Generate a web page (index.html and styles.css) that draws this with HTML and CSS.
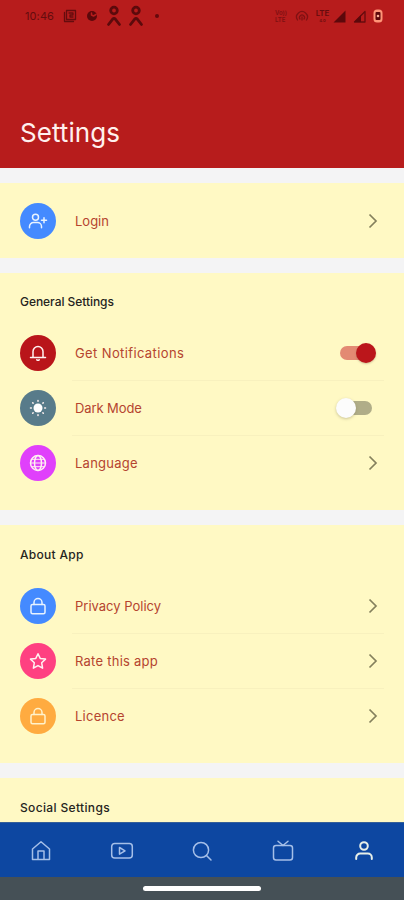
FILE: index.html
```html
<!DOCTYPE html>
<html lang="en">
<head>
<meta charset="utf-8">
<title>Settings</title>
<link rel="stylesheet" href="styles.css">
</head>
<body>
<svg class="defs" aria-hidden="true">
  <symbol id="chevron" viewBox="0 0 10 16"><path d="M1.500 1.500 8 8l-6.500 6.500"/></symbol>
  <symbol id="lock" viewBox="0 0 18 18"><rect x="2" y="7.500" width="14" height="9.200" rx="1.500"/><path d="M5 7.500V5.500a4 4 0 0 1 8 0v2"/></symbol>
  <symbol id="contact" viewBox="0 0 16 22"><circle cx="8" cy="5.500" r="3.300"/><path d="m2.500 19.500 4-5.200q1.500-1.500 3 0l4 5.200"/></symbol>
</svg>
<div class="phone">
  <header class="header">
    <div class="status">
      <div class="status-left">
        <span class="time">10:46</span>
        <svg width="14" height="14" viewBox="0 0 14 14"><path class="line" d="M3.500 1.500h9v9h-9zM1.500 3.500v9h9M6 4h4v2H7v2h3"/></svg>
        <svg width="12" height="12" viewBox="0 0 12 12"><circle class="solid" cx="6" cy="6" r="5"/><path class="cut" d="M5.500 3v2l2 1 2.500-1.500"/></svg>
        <svg class="contact" width="16" height="22"><use href="#contact"/></svg>
        <svg class="contact" width="16" height="22"><use href="#contact"/></svg>
        <i class="dot"></i>
      </div>
      <div class="status-right">
        <span class="volte">Vo))<br>LTE</span>
        <svg width="14" height="13" viewBox="0 0 14 13"><path class="line faint" d="M2.500 10a5.400 5.400 0 1 1 9 0M5 9a2.500 2.500 0 1 1 4 0M7 7v3"/></svg>
        <span class="lte"><b>LTE</b><small>4.0</small></span>
        <svg width="13" height="13" viewBox="0 0 13 13"><path class="solid" d="M12.500.5v12H.5z"/></svg>
        <svg width="13" height="13" viewBox="0 0 13 13"><path class="line" d="M12 1.500V12H1.500z"/><path class="solid" d="M8 5v7H1z"/></svg>
        <svg width="10" height="14" viewBox="0 0 10 14"><rect class="battery" x=".5" y=".5" width="9" height="13" rx="3.500"/><rect class="solid" x="2.500" y="3" width="5" height="8" rx="1"/><circle class="spark" cx="5" cy="7" r="1.300"/></svg>
      </div>
    </div>
    <h1>Settings</h1>
  </header>

  <main>
    <section class="card login">
      <div class="row">
        <span class="badge blue"><svg width="20" height="18" viewBox="0 0 20 18"><circle cx="7.500" cy="5.300" r="3"/><path d="M1.500 15.700V14.500a4 4 0 0 1 4-4h4a4 4 0 0 1 4 4v1.200M16 5.800v5M13.500 8.300h5"/></svg></span>
        <span class="label">Login</span>
        <svg class="chevron"><use href="#chevron"/></svg>
      </div>
    </section>

    <section class="card general">
      <h2>General Settings</h2>
      <div class="row">
        <span class="badge red"><svg width="18" height="18" viewBox="0 0 18 18"><path d="M1.500 13.500h15M4 13.500v-6a5 5 0 0 1 10 0v6M7.800 15.800q1.200 1 2.400 0"/></svg></span>
        <span class="label wide">Get Notifications</span>
        <span class="switch on"><i></i></span>
      </div>
      <div class="row">
        <span class="badge slate"><svg width="18" height="18" viewBox="0 0 18 18"><circle class="sun" cx="9" cy="9" r="4.500"/><path class="rays" d="M9 1.500v.8M9 15.700v.8M1.500 9h.8M15.700 9h.8M3.700 3.700l.4.400M13.900 13.900l.4.400M3.700 14.300l.4-.4M13.900 4.100l.4-.4"/></svg></span>
        <span class="label snug">Dark Mode</span>
        <span class="switch off"><i></i></span>
      </div>
      <div class="row">
        <span class="badge purple"><svg width="18" height="18" viewBox="0 0 18 18"><circle cx="9" cy="9" r="7.500"/><ellipse cx="9" cy="9" rx="3.500" ry="7.500"/><path d="M1.500 9h15M2.800 5.300h12.400M2.800 12.700h12.400" stroke-width="1"/></svg></span>
        <span class="label loose">Language</span>
        <svg class="chevron"><use href="#chevron"/></svg>
      </div>
    </section>

    <section class="card about">
      <h2>About App</h2>
      <div class="row">
        <span class="badge blue"><svg width="18" height="18"><use href="#lock"/></svg></span>
        <span class="label">Privacy Policy</span>
        <svg class="chevron"><use href="#chevron"/></svg>
      </div>
      <div class="row">
        <span class="badge pink"><svg width="18" height="18" viewBox="0 0 18 18"><path d="m9 1.700 2.200 4.700 5.300.7-3.800 3.700.9 5.400L9 13.600l-4.600 2.600.9-5.400-3.800-3.700 5.300-.7z"/></svg></span>
        <span class="label loose">Rate this app</span>
        <svg class="chevron"><use href="#chevron"/></svg>
      </div>
      <div class="row">
        <span class="badge orange"><svg width="18" height="18"><use href="#lock"/></svg></span>
        <span class="label loose">Licence</span>
        <svg class="chevron"><use href="#chevron"/></svg>
      </div>
    </section>

    <section class="card social">
      <h2>Social Settings</h2>
    </section>
  </main>

  <nav class="tabs">
    <a><svg width="22" height="22" viewBox="0 0 22 22"><path d="M2.500 9 11 1.800 19.500 9v10.500h-17zM8 19.500v-8.500h6v8.500"/></svg></a>
    <a><svg width="24" height="22" viewBox="0 0 24 22"><rect x="1.700" y="3.500" width="20.600" height="14.500" rx="3"/><path d="m9.500 7.500 5.500 3.300-5.500 3.300z"/></svg></a>
    <a><svg width="22" height="22" viewBox="0 0 22 22"><circle cx="10" cy="10" r="7.600"/><path d="m15.500 15.500 4.500 4.500"/></svg></a>
    <a><svg width="22" height="22" viewBox="0 0 22 22"><rect x="1.500" y="5.500" width="19" height="14.500" rx="2.500"/><path d="m6 1.300 5 4.200 5-4.200"/></svg></a>
    <a class="active"><svg width="22" height="22" viewBox="0 0 22 22"><circle cx="11" cy="6" r="3.800"/><path d="M3.200 19v-1.500a4 4 0 0 1 4-4h7.600a4 4 0 0 1 4 4V19"/></svg></a>
  </nav>
  <div class="gesture"><i></i></div>
</div>
</body>
</html>
```
FILE: styles.css
```css
* { box-sizing: border-box; }
body { margin: 0; font-family: Inter, "Noto Sans", sans-serif; }
svg { display: block; flex: none; fill: none; stroke: currentColor; stroke-width: 1.5; stroke-linecap: round; stroke-linejoin: round; }
.defs { position: absolute; width: 0; height: 0; }
.phone { width: 404px; height: 900px; display: flex; flex-direction: column; overflow: hidden; background: #f4f4f5; }

.header { flex: none; height: 168px; background: #b71c1c; color: #fff0ee; }
.status { height: 32px; padding: 0 21px 0 25px; display: flex; justify-content: space-between; align-items: center; color: #650c0e; }
.status-left, .status-right { display: flex; align-items: center; }
.time { width: 38px; font-size: 11px; letter-spacing: .1px; }
.status-left svg + svg { margin-left: 9px; }
.status-left svg + .contact { margin-left: 8px; }
.status-left .contact + .contact { margin-left: 6px; }
.contact { color: #5c0a0c; stroke-width: 2.8; }
.dot { width: 4px; height: 4px; margin-left: 11px; border-radius: 50%; background: #65090c; }
.volte { margin-right: 8px; font-size: 6px; line-height: 7px; font-weight: 600; color: #7d1012; }
.lte { width: 15px; margin: 0 3px 0 6px; display: flex; flex-direction: column; align-items: center; }
.lte b { font-size: 8px; line-height: 10px; font-weight: 600; letter-spacing: -.1px; }
.lte small { font-size: 4px; line-height: 6px; font-weight: 600; }
.status-right svg + svg { margin-left: 7px; }
.solid { fill: #5c080b; stroke: none; }
.line { stroke-width: 1.3; }
.faint { stroke: #801113; }
.cut { stroke: #b71c1c; }
.battery { fill: #ff9578; stroke: none; }
.spark { fill: #ffb199; stroke: none; }
h1 { margin: 84px 0 0 20px; font-size: 26px; line-height: 34px; font-weight: 400; letter-spacing: .05px; }

main { flex: 1; min-height: 0; padding-top: 15px; display: flex; flex-direction: column; gap: 15px; overflow: hidden; }
.card { flex: none; padding: 0 20px; background: #fff9c4; }
.login { height: 75px; padding-top: 10px; }
.general { height: 237px; }
.about { height: 238px; }
.social { height: 60px; }
h2 { height: 52px; margin: 0; padding-top: 19px; font-size: 12px; line-height: 20px; font-weight: 500; letter-spacing: -.05px; color: #25241e; }
.about h2 { height: 53px; padding-top: 20px; letter-spacing: .3px; }
.social h2 { padding-top: 20px; letter-spacing: .35px; }
.row { height: 55px; padding-right: 6px; display: flex; align-items: center; }
.badge { width: 36px; height: 36px; margin-right: 19px; display: grid; place-items: center; border-radius: 50%; color: #fff2f1; }
.blue { background: #448aff; color: #e8f3ff; }
.red { background: #b9151a; }
.slate { background: #587b8a; }
.purple { background: #e040fb; }
.pink { background: #ff4081; }
.orange { background: #ffab40; color: #fff2cb; }
.sun { fill: #fff; stroke: none; }
.rays { stroke-width: 1.5; }
.label { flex: 1; font-size: 13px; line-height: 20px; color: #b5442f; }
.wide { letter-spacing: .38px; }
.loose { letter-spacing: .25px; }
.snug { letter-spacing: -.1px; }
.row + .row { background: linear-gradient(#f8f1be, #f8f1be) 52px 0 / 100% 1px no-repeat; }
.chevron { width: 10px; height: 16px; color: #84805d; stroke-width: 1.7; stroke-linecap: butt; stroke-linejoin: miter; }

.switch { width: 32px; height: 14px; border-radius: 7px; display: flex; align-items: center; }
.switch i { width: 20px; height: 20px; flex: none; border-radius: 50%; }
.on { margin-right: 6px; background: #e38a73; justify-content: flex-end; }
.on i { margin-right: -4px; background: #bb161b; box-shadow: 0 1px 2px #8b6b4b66; }
.off { margin-right: 6px; background: #b0ad88; }
.off i { margin-left: -4px; background: #fcfcfc; box-shadow: 0 1px 3px #77745066; }

.tabs { flex: none; height: 55px; padding: 1px 0 0 1px; display: grid; grid-template-columns: repeat(5, 1fr); background: #0d47a1; border-top: 1px solid #355f98; color: #a5bfe8; }
.tabs a { display: grid; place-items: center; }
.tabs .active { color: #e7efe8; }
.active svg { stroke-width: 2; }
.gesture { flex: none; height: 23px; display: grid; place-items: center; background: #455056; }
.gesture i { width: 118px; height: 5px; border-radius: 3px; background: #fff; }
```
